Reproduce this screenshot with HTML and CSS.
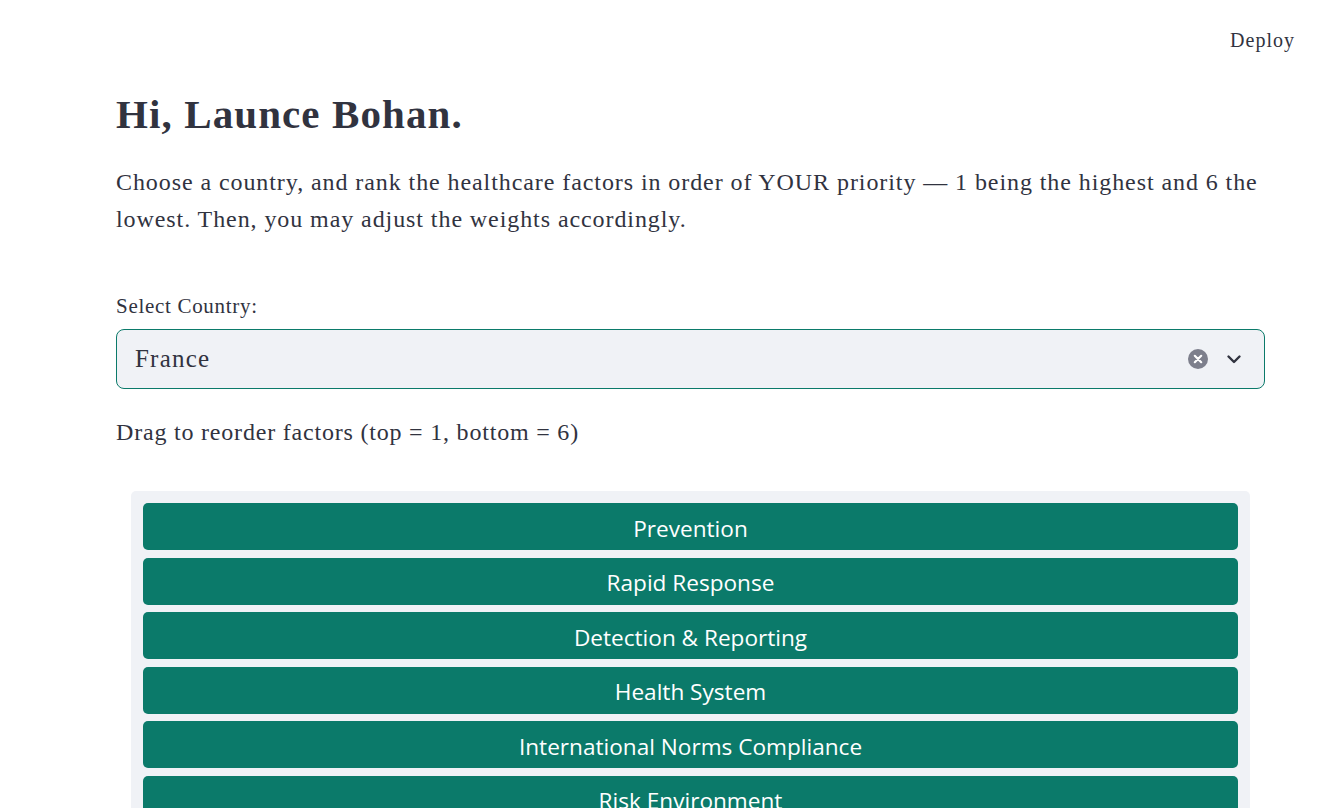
FILE: index.html
```html
<!DOCTYPE html>
<html lang="en">
<head>
<meta charset="utf-8">
<title>Healthcare priorities</title>
<link rel="stylesheet" href="styles.css">
</head>
<body>
<header class="topbar">
  <span class="deploy">Deploy</span>
</header>
<main class="main">
  <h1 class="title">Hi, Launce Bohan.</h1>
  <p class="intro">Choose a country, and rank the healthcare factors in order of YOUR priority — 1 being the highest and 6 the lowest. Then, you may adjust the weights accordingly.</p>
  <label class="label">Select Country:</label>
  <div class="select">
    <span class="select-value">France</span>
    <span class="select-icons">
      <svg class="clear" width="20" height="20" viewBox="0 0 20 20"><circle cx="10" cy="10" r="10" fill="#7d7f8c"/><path d="M6.8 6.8 13.2 13.2 M13.2 6.8 6.8 13.2" stroke="#fff" stroke-width="2.2" stroke-linecap="round"/></svg>
      <svg class="chev" width="18" height="18" viewBox="0 0 18 18"><path d="M3.5 6.5 9 12 14.5 6.5" fill="none" stroke="#31333f" stroke-width="2.4" stroke-linecap="round" stroke-linejoin="round"/></svg>
    </span>
  </div>
  <p class="drag">Drag to reorder factors (top = 1, bottom = 6)</p>
  <div class="sortable">
    <div class="item">Prevention</div>
    <div class="item">Rapid Response</div>
    <div class="item">Detection &amp; Reporting</div>
    <div class="item">Health System</div>
    <div class="item">International Norms Compliance</div>
    <div class="item">Risk Environment</div>
  </div>
</main>
</body>
</html>
```
FILE: styles.css
```css
html, body {
  margin: 0;
  padding: 0;
  background: #ffffff;
  color: #31333f;
  font-family: "Liberation Serif", "DejaVu Serif", serif;
  overflow: hidden;
}
.topbar {
  height: 60px;
  display: flex;
  justify-content: flex-end;
  align-items: center;
  padding: 0 38px 0 0;
  box-sizing: border-box;
}
.deploy {
  font-size: 20px;
  letter-spacing: 1px;
  color: #31333f;
  margin-top: 20px;
}
.main {
  padding: 0 68px 0 116px;
}
.title {
  margin: 26px 0 0 0;
  font-size: 41px;
  font-weight: 700;
  letter-spacing: 1.1px;
  line-height: 56px;
  color: #31333f;
}
.intro {
  margin: 22px 0 0 0;
  font-size: 24px;
  letter-spacing: 0.92px;
  line-height: 37px;
}
.label {
  display: block;
  margin-top: 55px;
  font-size: 21px;
  letter-spacing: 0.7px;
  line-height: 26px;
}
.select {
  margin-top: 10px;
  height: 60px;
  box-sizing: border-box;
  border: 1px solid #0b7a6a;
  border-radius: 8px;
  background: #f0f2f6;
  display: flex;
  align-items: center;
  justify-content: space-between;
  padding: 0 21px 0 18px;
}
.select-value {
  font-size: 25px;
  letter-spacing: 1.2px;
}
.select-icons {
  display: flex;
  align-items: center;
  gap: 17px;
}
.drag {
  margin: 28px 0 0 0;
  font-size: 24px;
  letter-spacing: 0.8px;
  line-height: 30px;
}
.sortable {
  margin: 44px 15px 0 15px;
  background: #f0f2f6;
  border-radius: 5px;
  padding: 12px 12px 12px 12px;
  display: flex;
  flex-direction: column;
  gap: 7.6px;
}
.item {
  height: 47px;
  box-sizing: border-box;
  padding-top: 3px;
  border-radius: 5px;
  background: #0b7a6a;
  color: #ffffff;
  font-family: "Open Sans", "Noto Sans", sans-serif;
  font-size: 22.6px;
  display: flex;
  align-items: center;
  justify-content: center;
}
```
